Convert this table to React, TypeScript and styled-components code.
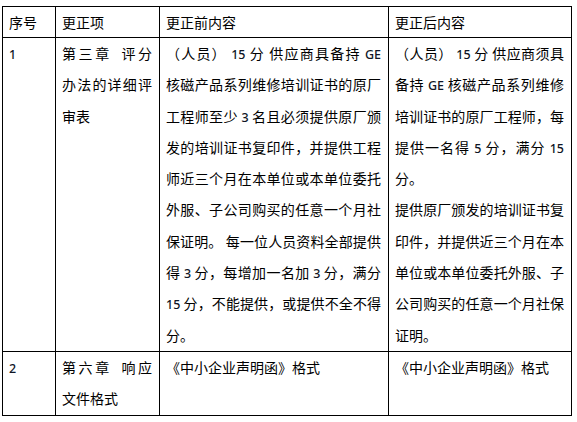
import React from "react";
import styled, { createGlobalStyle } from "styled-components";

const Global = createGlobalStyle`
  html, body { margin: 0; padding: 0; background: #fff; }
  body {
    font-family: "Noto Sans CJK SC", "Noto Sans", sans-serif;
    font-size: 14px;
    color: #000;
  }
`;

const Page = styled.div`
  padding: 6px 0 0 2px;
`;

const Table = styled.div`
  display: grid;
  grid-template-columns: 53px 104px 229px 183px;
  width: max-content;
  border-top: 1px solid #000;
  border-left: 1px solid #000;
`;

const Cell = styled.div`
  border-right: 1px solid #000;
  border-bottom: 1px solid #000;
  padding: 0 7px 0 6px;
  min-width: 0;
`;

const Line = styled.div<{ $fill?: boolean; $head?: boolean }>`
  line-height: ${(p) => (p.$head ? "30px" : "31.3px")};
  height: ${(p) => (p.$head ? "30px" : "31.3px")};
  text-align: justify;
  text-align-last: ${(p) => (p.$fill ? "justify" : "left")};
  white-space: nowrap;
  overflow: visible;
`;

const Lat = styled.span`
  font-family: "Noto Sans", "Open Sans", sans-serif;
  font-size: 12.5px;
  font-weight: 500;
  color: #0f1626;
`;

type Seg = string | { n: string };
type L = { segs: Seg[]; fill?: boolean };

const parse = (s: string): Seg[] => {
  const out: Seg[] = [];
  const re = /([0-9A-Za-z]+)/g;
  let last = 0;
  let m: RegExpExecArray | null;
  while ((m = re.exec(s))) {
    if (m.index > last) out.push(s.slice(last, m.index));
    out.push({ n: m[1] });
    last = m.index + m[1].length;
  }
  if (last < s.length) out.push(s.slice(last));
  return out;
};

const lines = (arr: [string, boolean?][]): L[] =>
  arr.map(([t, f]) => ({ segs: parse(t), fill: !!f }));

const CellText = ({ ls, head }: { ls: L[]; head?: boolean }) => (
  <Cell>
    {ls.map((l, i) => (
      <Line key={i} $fill={l.fill} $head={head}>
        {l.segs.map((s, j) =>
          typeof s === "string" ? (
            <React.Fragment key={j}>{s}</React.Fragment>
          ) : (
            <Lat key={j}>{s.n}</Lat>
          )
        )}
      </Line>
    ))}
  </Cell>
);

const header = ["序号", "更正项", "更正前内容", "更正后内容"];

const rows: L[][][] = [
  [
    lines([["1"]]),
    lines([
      ["第三章\u2002评分", true],
      ["办法的详细评", true],
      ["审表"],
    ]),
    lines([
      ["（人员） 15 分 供应商具备持 GE", true],
      ["核磁产品系列维修培训证书的原厂", true],
      ["工程师至少 3 名且必须提供原厂颁", true],
      ["发的培训证书复印件，并提供工程", true],
      ["师近三个月在本单位或本单位委托", true],
      ["外服、子公司购买的任意一个月社", true],
      ["保证明。 每一位人员资料全部提供", true],
      ["得 3 分，每增加一名加 3 分，满分", true],
      ["15 分，不能提供，或提供不全不得", true],
      ["分。"],
    ]),
    lines([
      ["（人员） 15 分 供应商须具", true],
      ["备持 GE 核磁产品系列维修", true],
      ["培训证书的原厂工程师，每", true],
      ["提供一名得 5 分，满分 15", true],
      ["分。"],
      ["提供原厂颁发的培训证书复", true],
      ["印件，并提供近三个月在本", true],
      ["单位或本单位委托外服、子", true],
      ["公司购买的任意一个月社保", true],
      ["证明。"],
    ]),
  ],
  [
    lines([["2"]]),
    lines([["第六章\u2002响应", true], ["文件格式"]]),
    lines([["《中小企业声明函》格式"]]),
    lines([["《中小企业声明函》格式"]]),
  ],
];

export default function App() {
  return (
    <>
      <Global />
      <Page>
        <Table>
          {header.map((h) => (
            <CellText key={h} head ls={lines([[h]])} />
          ))}
          {rows.map((r, i) =>
            r.map((c, j) => <CellText key={`${i}-${j}`} ls={c} />)
          )}
        </Table>
      </Page>
    </>
  );
}
